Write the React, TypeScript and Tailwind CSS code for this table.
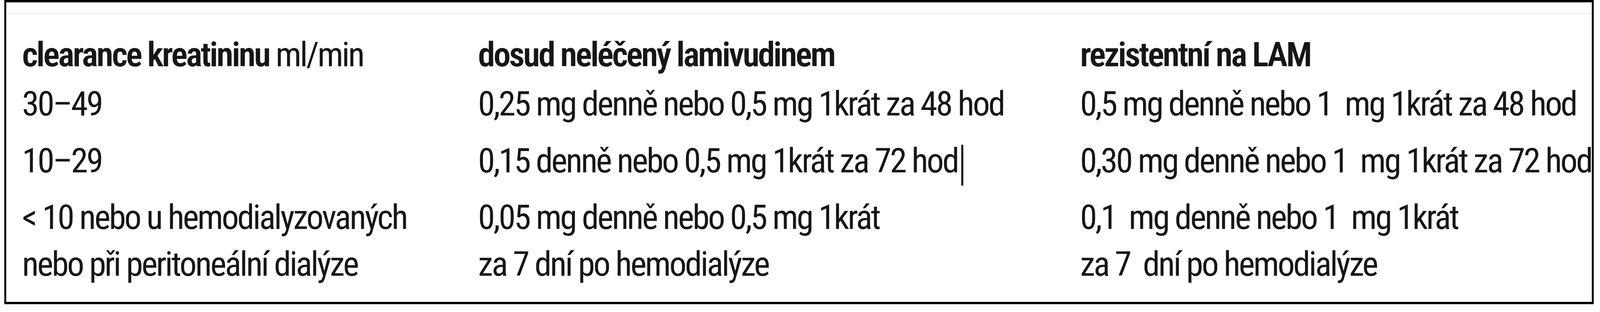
// Horizontal sizes are given as shares of the page width, vertical ones in px.
const ROWS = [
  {
    crcl: ["30–49"],
    naive: ["0,25 mg denně nebo 0,5 mg 1krát za 48 hod"],
    resistant: ["0,5 mg denně nebo 1  mg 1krát za 48 hod"],
  },
  {
    crcl: ["10–29"],
    naive: ["0,15 denně nebo 0,5 mg 1krát za 72 hod"],
    resistant: ["0,30 mg denně nebo 1  mg 1krát za 72 hod"],
    cursor: true,
  },
  {
    crcl: ["< 10 nebo u hemodialyzovaných", "nebo při peritoneální dialýze"],
    naive: ["0,05 mg denně nebo 0,5 mg 1krát", "za 7 dní po hemodialýze"],
    resistant: ["0,1  mg denně nebo 1  mg 1krát", "za 7  dní po hemodialýze"],
  },
];

function Lines({ lines }: { lines: string[] }) {
  return (
    <>
      {lines.map((l, i) => (
        <div key={i} className="whitespace-pre">
          {l}
        </div>
      ))}
    </>
  );
}

export default function App() {
  return (
    <div
      className="w-full h-[800px] overflow-hidden bg-white text-[#161616] text-[88px] leading-[120px] font-stretch-condensed tracking-[-4px]"
      style={{ fontFamily: "Roboto, 'Noto Sans', sans-serif" }}
    >
      <div className="ml-[0.257%] w-[99.35%] h-[780px] border-x-[5px] border-y-[6px] border-black">
        <div className="mt-[27px] h-[2px] bg-[#efefef]" />

        <div className="pl-[1.01%] pt-[45px]">
          {/* header */}
          <div className="grid grid-cols-[29.05%_38.35%_1fr] mb-[6px]">
            <div className="whitespace-pre">
              <span className="font-semibold">clearance kreatininu</span> ml/min
            </div>
            <div className="font-semibold whitespace-pre">dosud neléčený lamivudinem</div>
            <div className="font-semibold whitespace-pre">rezistentní na LAM</div>
          </div>

          {ROWS.map((r, i) => (
            <div key={i} className="grid grid-cols-[29.05%_38.35%_1fr] mb-[25.5px]">
              <div>
                <Lines lines={r.crcl} />
              </div>
              <div>
                {r.cursor ? (
                  <div className="whitespace-pre">
                    {r.naive[0]}
                    <span className="inline-block w-[5px] h-[105px] ml-[9px] -mb-[34px] bg-black" />
                  </div>
                ) : (
                  <Lines lines={r.naive} />
                )}
              </div>
              <div>
                <Lines lines={r.resistant} />
              </div>
            </div>
          ))}
        </div>
      </div>
    </div>
  );
}
